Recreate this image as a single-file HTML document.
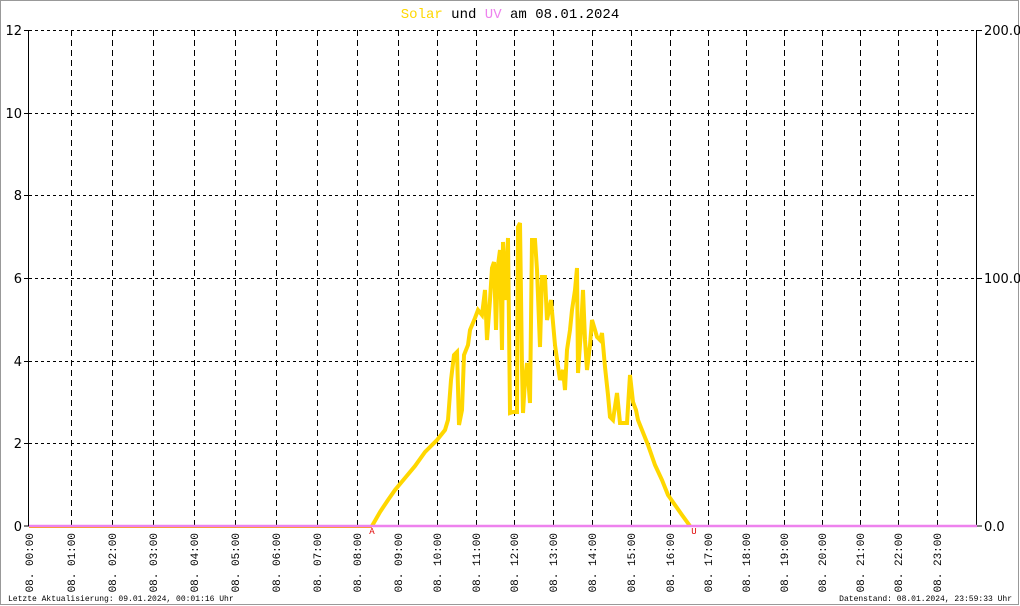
<!DOCTYPE html><html><head><style>body{margin:0;background:#fff}svg{display:block}</style></head><body>
<svg width="1020" height="606" xmlns="http://www.w3.org/2000/svg" font-family="Liberation Mono, monospace">
<rect x="0.5" y="0.5" width="1018" height="604" fill="#fff" stroke="#999"/>
<text x="510" y="18" font-size="14" text-anchor="middle"><tspan fill="#ffd700">Solar</tspan> und <tspan fill="#ee82ee">UV</tspan> am 08.01.2024</text>
<g stroke="#000" stroke-width="1" stroke-dasharray="3,3">
<line x1="29" y1="30.5" x2="977" y2="30.5"/><line x1="29" y1="113.5" x2="977" y2="113.5"/><line x1="29" y1="195.5" x2="977" y2="195.5"/><line x1="29" y1="278.5" x2="977" y2="278.5"/><line x1="29" y1="361.5" x2="977" y2="361.5"/><line x1="29" y1="443.5" x2="977" y2="443.5"/>
</g>
<g stroke="#000" stroke-width="1" stroke-dasharray="6,4" id="vg"></g>
<line x1="28.5" y1="30" x2="28.5" y2="526" stroke="#000"/>
<line x1="976.5" y1="30" x2="976.5" y2="526" stroke="#000"/>
<g stroke="#000"><line x1="24" y1="30.5" x2="29" y2="30.5"/><line x1="24" y1="113.5" x2="29" y2="113.5"/><line x1="24" y1="195.5" x2="29" y2="195.5"/><line x1="24" y1="278.5" x2="29" y2="278.5"/><line x1="24" y1="361.5" x2="29" y2="361.5"/><line x1="24" y1="443.5" x2="29" y2="443.5"/><line x1="24" y1="526" x2="29" y2="526"/>
<line x1="977" y1="30.5" x2="982" y2="30.5"/><line x1="977" y1="278.5" x2="982" y2="278.5"/><line x1="977" y1="526" x2="982" y2="526"/></g>
<g font-size="13" text-anchor="end" font-family="DejaVu Sans, sans-serif"><text x="22" y="35">12</text><text x="22" y="118">10</text><text x="22" y="200">8</text><text x="22" y="283">6</text><text x="22" y="366">4</text><text x="22" y="448">2</text><text x="22" y="531">0</text></g>
<g font-size="13" font-family="DejaVu Sans, sans-serif"><text x="984" y="35">200.0</text><text x="984" y="283">100.0</text><text x="984" y="531">0.0</text></g>
<line x1="29" y1="527.5" x2="372" y2="527.5" stroke="#ffa500" stroke-width="1"/>
<polyline fill="none" stroke="#ffd700" stroke-width="4" stroke-linejoin="miter" points="372,526 380,512 388,500 395,490 405,478 415,466 425,452 437,440 445,430 448,420 451,380 454,355 457,352 459,425 462,410 464,355 468,345 470,330 475,318 478,310 482,315 485,290 487,340 490,300 492,268 494,262 496,330 498,265 500,250 502,350 503,242 505,300 508,238 510,413 513,412 517,412 518,227 520,223 522,367 523,413 525,380 527,363 530,403 532,240 535,240 537,270 540,347 542,277 545,277 547,320 551,300 555,345 560,380 563,370 565,390 567,350 570,330 572,310 575,290 577,268 578,373 581,330 583,290 585,340 587,370 590,345 592,320 595,330 597,337 600,340 602,333 605,367 608,395 610,417 613,420 617,393 620,423 627,423 630,375 633,402 636,410 638,420 642,430 648,445 655,465 662,480 668,495 675,505 682,515 690,526"/>
<line x1="29" y1="526" x2="977" y2="526" stroke="#ee82ee" stroke-width="2.5"/>
<g font-size="9" fill="#e00000" text-anchor="middle"><text x="372" y="534">A</text><text x="694" y="534">U</text></g>
<g font-size="11" text-anchor="end" id="xl"></g>
<text x="8" y="601" font-size="8">Letzte Aktualisierung: 09.01.2024, 00:01:16 Uhr</text>
<text x="1012" y="601" font-size="8" text-anchor="end">Datenstand: 08.01.2024, 23:59:33 Uhr</text>
<script>
var X=[29,71,112,153,194,235,276,317,357,398,437,476,514,553,592,631,670,708,746,784,822,860,898,937];
var vg=document.getElementById('vg'),xl=document.getElementById('xl'),ns='http://www.w3.org/2000/svg';
for(var i=0;i<24;i++){var x=X[i];
if(i>0){var l=document.createElementNS(ns,'line');l.setAttribute('x1',x+.5);l.setAttribute('x2',x+.5);l.setAttribute('y1',30);l.setAttribute('y2',526);vg.appendChild(l);}
var t=document.createElementNS(ns,'text');var h=(i<10?'0':'')+i;t.textContent='08. '+h+':00';
t.setAttribute('transform','translate('+(x+4)+',533) rotate(-90)');xl.appendChild(t);}
</script>
</svg></body></html>
